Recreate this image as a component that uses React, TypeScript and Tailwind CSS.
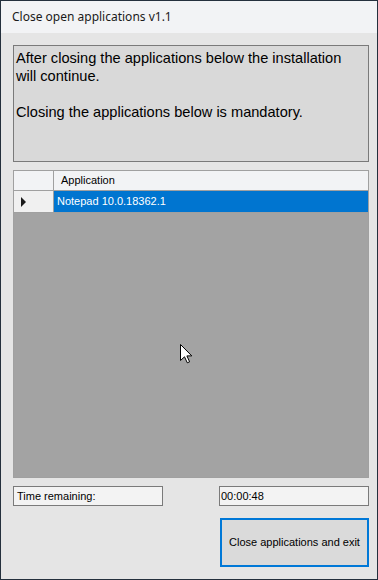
import React from "react";

const SANS = "font-['Liberation_Sans',Arial,sans-serif]";

function Cursor() {
  return (
    <svg width="13" height="20" viewBox="0 0 13 20" className="absolute left-[166px] top-[173px]">
      <path
        d="M0.5 0.5 L0.5 16.5 L4.5 12.8 L7.3 18.8 L9.6 17.8 L6.9 11.9 L11.8 11.9 Z"
        fill="#ffffff"
        stroke="#000000"
        strokeWidth="1"
        strokeLinejoin="miter"
      />
    </svg>
  );
}

export default function App() {
  return (
    <div className="w-[378px] h-[580px] flex flex-col border border-[#24303d] bg-[#e5e5e5] overflow-hidden">
      {/* title bar */}
      <div className="h-[32px] shrink-0 bg-[#f2f3f5] flex items-center pl-[11px]">
        <span className="text-[12px] text-[#1a1a1a] font-['Noto_Sans','Open_Sans',sans-serif]">
          Close open applications v1.1
        </span>
      </div>

      <div className="flex flex-col pl-[12px] pt-[12px]">
        {/* message */}
        <div className={`w-[356px] h-[117px] border border-[#7a7a7a] bg-[#d9d9d9] px-[2px] pt-[3px] text-[14.6px] leading-[18px] text-black ${SANS}`}>
          <p>
            After closing the applications below the installation
            <br />
            will continue.
          </p>
          <p className="mt-[18px]">Closing the applications below is mandatory.</p>
        </div>

        {/* grid */}
        <div className={`relative mt-[8px] w-[356px] h-[308px] border border-[#a0a0a0] bg-[#a3a3a3] ${SANS}`}>
          <div className="flex h-[20px] border-b border-[#a0a0a0] bg-[#f2f3f5]">
            <div className="w-[40px] border-r border-[#a0a0a0]" />
            <div className="flex-1 flex items-center pl-[7px] text-[11px] text-black">Application</div>
          </div>
          <div className="flex h-[22px] border-b border-[#a0a0a0]">
            <div className="w-[40px] border-r border-[#a0a0a0] bg-[#f0f0f0] flex items-center pl-[7px]">
              <svg width="6" height="10" viewBox="0 0 6 10">
                <path d="M0 0 L5 5 L0 10 Z" fill="#1a1a1a" />
              </svg>
            </div>
            <div className="flex-1 flex items-center pl-[3px] bg-[#0075d0] text-[11px] text-white">
              Notepad 10.0.18362.1
            </div>
          </div>
          <Cursor />
        </div>

        {/* time */}
        <div className={`mt-[8px] flex w-[356px] justify-between text-[11px] text-black ${SANS}`}>
          <div className="w-[150px] h-[20px] border border-[#7a7a7a] bg-[#f3f3f3] flex items-center pl-[3px]">
            Time remaining:
          </div>
          <div className="w-[150px] h-[20px] border border-[#7a7a7a] bg-[#f3f3f3] flex items-center pl-[1px]">
            00:00:48
          </div>
        </div>

        {/* button */}
        <div className="mt-[12px] flex w-[356px] justify-end">
          <button
            className={`w-[149px] h-[49px] border-2 border-[#0078d7] bg-[#dadada] text-[11px] text-black ${SANS}`}
          >
            Close applications and exit
          </button>
        </div>
      </div>
    </div>
  );
}
